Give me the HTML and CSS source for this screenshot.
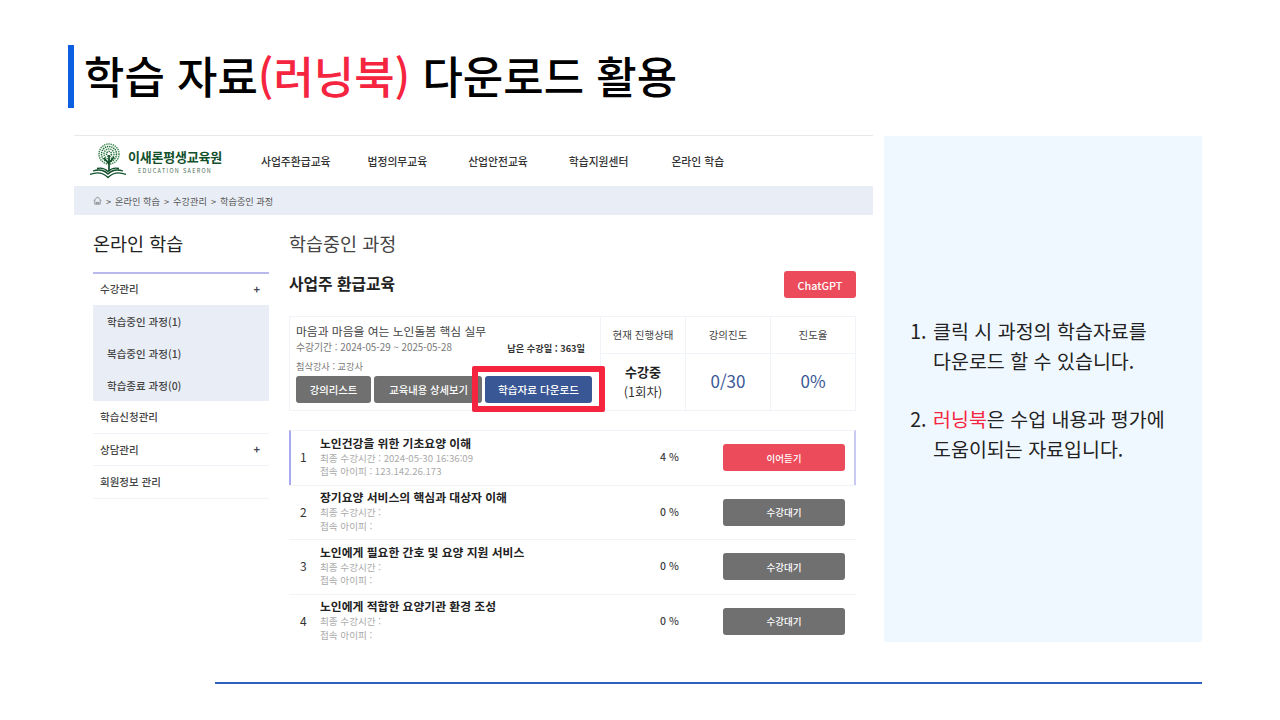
FILE: index.html
```html
<!DOCTYPE html>
<html lang="ko">
<head>
    <meta charset="UTF-8">
    <title>학습 자료(러닝북) 다운로드 활용</title>
    <link rel="stylesheet" href="styles.css">
</head>
<body>
    <div class="slide">
        <h1 class="slide-title">학습 자료<span class="red">(러닝북)</span> 다운로드 활용</h1>

        <div class="slide-body">
            <!-- 화면 캡처 -->
            <div class="shot">
                <div class="top-header">
                    <div class="logo">
                        <svg class="logo-mark" width="36" height="36" viewBox="0 0 36 36">
                            <g fill="none" stroke-width="1.5" stroke-dasharray="1.4 0.8">
                                <circle cx="19" cy="11" r="10" stroke="#3f8a50"/>
                                <circle cx="19" cy="11" r="7.5" stroke="#1d6b36"/>
                                <circle cx="19" cy="11" r="5" stroke="#3f8a50"/>
                                <circle cx="19" cy="11" r="2.5" stroke="#1d6b36"/>
                            </g>
                            <path d="M19 28V12M19 21l-5-6M19 20l5-6" stroke="#124f2a" stroke-width="1.7" fill="none"/>
                            <path d="M0 31.500c7-3 13-2 18 3c5-5 11-6 18-3M3 28c6-2 11-1 15 3c4-4 9-5 15-3M7 25.500c4-1 8 0 11 3c3-3 7-4 11-3" stroke="#124f2a" stroke-width="1.300" fill="none"/>
                        </svg>
                        <div class="logo-text">
                            <strong>이새론평생교육원</strong>
                            <small>EDUCATION SAERON</small>
                        </div>
                    </div>
                    <nav class="gnb">
                        <a>사업주환급교육</a>
                        <a>법정의무교육</a>
                        <a>산업안전교육</a>
                        <a>학습지원센터</a>
                        <a>온라인 학습</a>
                    </nav>
                </div>

                <div class="breadcrumb">
                    <svg width="9" height="9" viewBox="0 0 10 10"><path d="M1 5l4-4 4 4M2 4.500V9h6V4.500M4 9V7h2v2" fill="none" stroke="#777" stroke-width="0.9"/></svg>
                    <span>&gt;</span><span>온라인 학습</span><span>&gt;</span><span>수강관리</span><span>&gt;</span><span>학습중인 과정</span>
                </div>

                <div class="shot-main">
                    <aside class="side">
                        <h2>온라인 학습</h2>
                        <ul class="side-menu">
                            <li class="side-item open">수강관리<b>+</b></li>
                            <li class="side-sub">
                                <a>학습중인 과정(1)</a>
                                <a>복습중인 과정(1)</a>
                                <a>학습종료 과정(0)</a>
                            </li>
                            <li class="side-item">학습신청관리</li>
                            <li class="side-item">상담관리<b>+</b></li>
                            <li class="side-item">회원정보 관리</li>
                        </ul>
                    </aside>

                    <section class="content">
                        <h2>학습중인 과정</h2>
                        <div class="content-head">
                            <h3>사업주 환급교육</h3>
                            <button class="btn btn-red btn-gpt">ChatGPT</button>
                        </div>

                        <div class="course">
                            <div class="course-info">
                                <div class="course-name">마음과 마음을 여는 노인돌봄 핵심 실무</div>
                                <div class="course-date">
                                    <span>수강기간 : 2024-05-29 ~ 2025-05-28</span>
                                    <strong>남은 수강일 : 363일</strong>
                                </div>
                                <div class="course-teacher">첨삭강사 : 교강사</div>
                                <div class="course-btns">
                                    <button class="btn btn-gray btn-list">강의리스트</button>
                                    <button class="btn btn-gray btn-detail">교육내용 상세보기</button>
                                    <div class="highlight">
                                        <button class="btn btn-blue">학습자료 다운로드</button>
                                    </div>
                                </div>
                            </div>
                            <div class="course-col col-status">
                                <div class="col-head">현재 진행상태</div>
                                <div class="col-value status"><strong>수강중</strong>(1회차)</div>
                            </div>
                            <div class="course-col">
                                <div class="col-head">강의진도</div>
                                <div class="col-value num">0/30</div>
                            </div>
                            <div class="course-col">
                                <div class="col-head">진도율</div>
                                <div class="col-value num">0%</div>
                            </div>
                        </div>

                        <div class="lessons">
                            <div class="lesson current">
                                <div class="lesson-no">1</div>
                                <div class="lesson-info">
                                    <strong>노인건강을 위한 기초요양 이해</strong>
                                    <span>최종 수강시간 : 2024-05-30 16:36:09</span>
                                    <span>접속 아이피 : 123.142.26.173</span>
                                </div>
                                <div class="lesson-rate">4 %</div>
                                <button class="btn btn-red btn-lesson">이어듣기</button>
                            </div>
                            <div class="lesson">
                                <div class="lesson-no">2</div>
                                <div class="lesson-info">
                                    <strong>장기요양 서비스의 핵심과 대상자 이해</strong>
                                    <span>최종 수강시간 :</span>
                                    <span>접속 아이피 :</span>
                                </div>
                                <div class="lesson-rate">0 %</div>
                                <button class="btn btn-gray btn-lesson">수강대기</button>
                            </div>
                            <div class="lesson">
                                <div class="lesson-no">3</div>
                                <div class="lesson-info">
                                    <strong>노인에게 필요한 간호 및 요양 지원 서비스</strong>
                                    <span>최종 수강시간 :</span>
                                    <span>접속 아이피 :</span>
                                </div>
                                <div class="lesson-rate">0 %</div>
                                <button class="btn btn-gray btn-lesson">수강대기</button>
                            </div>
                            <div class="lesson">
                                <div class="lesson-no">4</div>
                                <div class="lesson-info">
                                    <strong>노인에게 적합한 요양기관 환경 조성</strong>
                                    <span>최종 수강시간 :</span>
                                    <span>접속 아이피 :</span>
                                </div>
                                <div class="lesson-rate">0 %</div>
                                <button class="btn btn-gray btn-lesson">수강대기</button>
                            </div>
                        </div>
                    </section>
                </div>
            </div>

            <!-- 오른쪽 설명 -->
            <div class="note">
                <ol class="note-list">
                    <li>클릭 시 과정의 학습자료를<br>다운로드 할 수 있습니다.</li>
                    <li><span class="red">러닝북</span>은 수업 내용과 평가에<br>도움이되는 자료입니다.</li>
                </ol>
            </div>
        </div>

        <div class="bottom-line"></div>
    </div>
</body>
</html>
```

FILE: styles.css
```css
*,
*::after {
    box-sizing: border-box;
}
body {
    margin: 0;
    background: #fff;
    color: #000;
    font-family: "Noto Sans CJK KR", "Noto Sans", sans-serif;
}
.red {
    color: #f5243f;
}
.slide {
    width: 1280px;
    height: 720px;
    overflow: hidden;
    padding-top: 45px;
}
.slide-title {
    margin: 0 0 27px 68px;
    height: 63px;
    border-left: 6px solid #0b5fe0;
    padding-left: 10px;
    font-size: 43.9px;
    font-weight: 500;
    line-height: 60px;
    white-space: nowrap;
}
.slide-body {
    display: flex;
    margin-left: 74px;
    gap: 11px;
    height: 531px;
}
.shot {
    width: 799px;
    border-top: 1px solid #e8e8e8;
}
.top-header {
    display: flex;
    align-items: center;
    height: 50px;
    padding-left: 16px;
}
.logo {
    display: flex;
    align-items: center;
    width: 171px;
    gap: 2px;
}
.logo-text {
    display: flex;
    flex-direction: column;
    align-items: center;
    padding-top: 2px;
    line-height: 1;
}
.logo-text strong {
    font-size: 13px;
    color: #12502c;
    letter-spacing: -0.2px;
}
.logo-text small {
    margin-top: 6px;
    font-size: 5.5px;
    letter-spacing: 1.3px;
    color: #4a6a55;
}
.gnb {
    display: flex;
    gap: 41px;
    font-size: 10.8px;
    font-weight: 500;
    color: #333;
}
.gnb a:first-child {
    margin-right: -4px;
}
.gnb a:last-child {
    margin-left: 2px;
}
.breadcrumb {
    display: flex;
    align-items: center;
    gap: 4px;
    height: 29px;
    padding-left: 19px;
    background: #e9eef6;
    font-size: 9.2px;
    color: #555;
}
.shot-main {
    display: flex;
    padding-left: 19px;
}
.side {
    width: 176px;
}
.side h2,
.content > h2 {
    margin: 0;
    height: 57px;
    padding-top: 14px;
    font-size: 18.5px;
    font-weight: 400;
    line-height: 28px;
    color: #222;
}
.side-menu {
    margin: 0;
    padding: 0;
    list-style: none;
    border-top: 2px solid #b9b9ee;
    font-size: 10.5px;
    color: #444;
}
.side-item {
    display: flex;
    justify-content: space-between;
    align-items: center;
    height: 32.500px;
    padding: 0 9px 0 7px;
    border-bottom: 1px solid #f1f3f8;
    font-weight: 500;
}
.side-item.open {
    height: 31px;
    padding-bottom: 2px;
    border-bottom: 0;
}
.side-item b {
    font-size: 11px;
    color: #445;
}
.side-sub {
    display: flex;
    flex-direction: column;
    height: 96px;
    padding: 0 14px;
    background: #e9eef6;
}
.side-sub a {
    flex: 1;
    display: flex;
    align-items: center;
    font-weight: 500;
}
.content {
    width: 567px;
    margin-left: 20px;
}
.content > h2 {
    height: 56px;
    color: #444;
}
.content-head {
    display: flex;
    justify-content: space-between;
    align-items: center;
    height: 27px;
    margin-bottom: 18px;
}
.content-head h3 {
    margin: 0;
    padding-bottom: 2px;
    font-size: 15.8px;
    font-weight: 700;
    color: #222;
}
.btn {
    flex: none;
    border: 0;
    border-radius: 3px;
    padding: 0;
    color: #fff;
    font-family: inherit;
    font-size: 10.3px;
    font-weight: 500;
}
.btn-red {
    background: #eb4b5a;
}
.btn-gray {
    background: #707070;
}
.btn-blue {
    width: 107px;
    height: 27px;
    background: #3a5795;
    font-size: 10.6px;
}
.btn-gpt {
    width: 72px;
    height: 27px;
    font-size: 10.8px;
}
.course {
    display: flex;
    height: 95px;
    border: 1px solid #f0f3f8;
}
.course-info {
    width: 310px;
    padding: 5px 0 0 6px;
}
.course-name {
    font-size: 11.8px;
    line-height: 17px;
    color: #444;
}
.course-date {
    display: flex;
    justify-content: space-between;
    margin-top: 1px;
    padding-right: 15px;
    font-size: 9.8px;
    line-height: 14px;
    color: #777;
}
.course-date strong {
    color: #333;
    font-size: 9.2px;
    margin-top: 1px;
}
.course-teacher {
    margin-top: 4px;
    font-size: 9.2px;
    line-height: 14px;
    color: #777;
}
.course-btns {
    display: flex;
    align-items: flex-start;
    gap: 3px;
    margin-top: 3px;
}
.course-btns .btn-list {
    width: 75px;
    height: 27px;
}
.course-btns .btn-detail {
    width: 108px;
    height: 27px;
    padding-right: 14px;
    text-align: right;
}
.highlight {
    position: relative;
    flex: none;
    line-height: 0;
}
/* 빨간 강조 테두리 */
.highlight::after {
    content: "";
    position: absolute;
    left: -13px;
    top: -10px;
    width: 133px;
    height: 46px;
    border: 6px solid #f5243f;
    border-radius: 2px;
}
.course-col {
    display: flex;
    flex-direction: column;
    width: 85px;
    border-left: 1px solid #f0f3f8;
    text-align: center;
}
.col-head {
    height: 37px;
    border-bottom: 1px solid #f0f3f8;
    font-size: 10.5px;
    line-height: 36px;
    color: #444;
}
.col-value {
    flex: 1;
    display: flex;
    flex-direction: column;
    align-items: center;
    justify-content: center;
}
.status {
    font-size: 12.5px;
    line-height: 20px;
    color: #333;
}
.status strong {
    color: #222;
    font-size: 13px;
}
.num {
    padding-bottom: 4px;
    font-size: 17px;
    color: #3a5795;
}
.lessons {
    margin-top: 19px;
}
.lesson {
    display: flex;
    align-items: center;
    height: 54.500px;
    padding-left: 11px;
    border-top: 1px solid #f1f3f8;
}
.lesson.current {
    border-left: 2px solid #a9a9ee;
    border-right: 2px solid #c9c9f2;
    padding-left: 9px;
}
.lesson-no {
    width: 20px;
    padding-bottom: 2px;
    font-size: 12px;
    color: #333;
}
.lesson-info {
    display: flex;
    flex-direction: column;
    width: 340px;
    font-size: 9.6px;
    line-height: 13.500px;
    color: #aaa;
}
.lesson-info strong {
    margin-top: -2px;
    margin-bottom: 2px;
    font-size: 11.8px;
    font-weight: 700;
    line-height: 15px;
    color: #222;
}
.lesson-rate {
    width: 63px;
    padding-bottom: 2px;
    font-size: 10.5px;
    font-weight: 500;
    color: #444;
}
.btn-lesson {
    width: 122px;
    height: 27px;
    font-size: 9.5px;
}
.note {
    display: flex;
    align-items: center;
    width: 318px;
    height: 506px;
    margin-top: 1px;
    background: #f0f8ff;
}
.note-list {
    margin: 0;
    padding: 1px 0 0 48px;
    font-size: 19.5px;
    line-height: 30px;
    color: #222;
}
.note-list li {
    padding-left: 1px;
}
.note-list li + li {
    margin-top: 28px;
}
.bottom-line {
    width: 987px;
    height: 2px;
    margin: 16px 0 0 215px;
    background: #2e62c0;
}
```
